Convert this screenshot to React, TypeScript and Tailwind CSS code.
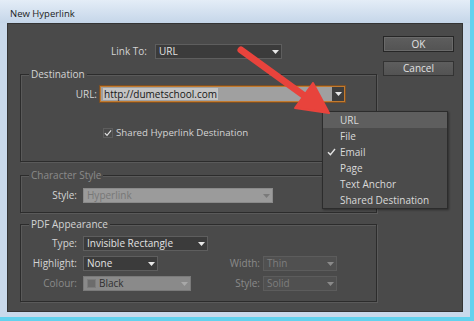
import React from 'react';

type Tone = 'dark' | 'off' | 'grey' | 'pale';

const Caret: React.FC<{ color: string }> = ({ color }) => (
  <svg width="7" height="4" viewBox="0 0 7 4">
    <path d="M0 0H7L3.5 4Z" fill={color} />
  </svg>
);

interface SelectProps {
  value: string;
  className: string;
  tone?: Tone;
  swatch?: boolean;
}

const tones: Record<Tone, { box: string; caret: string }> = {
  dark: { box: 'bg-[#3b3b3b] border-[#5e5e5e] text-[#e2e2e2]', caret: '#e8e8e8' },
  off: { box: 'bg-[#505050] border-[#5c5c5c] text-[#7e7e7e]', caret: '#8a8a8a' },
  grey: { box: 'bg-[#8a8a8a] border-[#7a7a7a] text-[#303030]', caret: '#a8a8a8' },
  pale: { box: 'bg-[#9b9b9b] border-[#8a8a8a] text-[#777777]', caret: '#7a7a7a' },
};

const Select: React.FC<SelectProps> = ({ value, className, tone = 'dark', swatch }) => (
  <div className={`flex h-[15px] items-center border ${tones[tone].box} ${className}`}>
    {swatch && <span className="ml-[3px] h-[9px] w-[9px] border border-[#7c7c7c] bg-[#6c6c6c]" />}
    <span className="flex-1 whitespace-nowrap pl-[3px] leading-[13px]">{value}</span>
    <span className="flex h-full w-[12px] items-center justify-center">
      <Caret color={tones[tone].caret} />
    </span>
  </div>
);

const Group: React.FC<{ title: string; disabled?: boolean; className: string; children: React.ReactNode }> = ({
  title,
  disabled,
  className,
  children,
}) => (
  <fieldset
    className={`border border-[#2c2c2c] shadow-[inset_1px_1px_0_#5a5a5a,1px_1px_0_#5a5a5a] ${className}`}
  >
    <legend
      className={`ml-[8px] bg-[#4a4a4a] px-[2px] leading-[14px] ${disabled ? 'text-[#8a8a8a]' : 'text-[#d4d4d4]'}`}
    >
      {title}
    </legend>
    {children}
  </fieldset>
);

const menuItems = ['URL', 'File', 'Email', 'Page', 'Text Anchor', 'Shared Destination'];

export default function App() {
  return (
    <div className="relative h-[321px] w-[474px] overflow-hidden border-r-4 border-b-4 border-[#63d2ee] bg-[#c9d9eb] font-['Open_Sans','Liberation_Sans',sans-serif]">
      <div className="flex h-[23px] items-center bg-gradient-to-b from-[#e4edf7] to-[#c5d6e9] pl-[10px] pt-[5px] text-[9.5px] text-[#1c1c1c]">
        New Hyperlink
      </div>

      <div className="ml-[7px] flex h-[289px] w-[456px] border border-[#343434] bg-[#4a4a4a] text-[10px] text-[#d4d4d4]">
        <div className="flex w-[369px] flex-col pl-[12px] pt-[20px]">
          <div className="flex h-[15px] items-center">
            <span className="w-[130px] pr-[3px] text-right">Link To:</span>
            <Select value="URL" className="ml-[5px] w-[127px]" />
          </div>

          <Group title="Destination" className="mt-[8px] h-[95px] w-[357px]">
            <div className="mt-[5px] flex h-[16px] items-center">
              <span className="w-[76px] text-right">URL:</span>
              <div className="ml-[3px] flex h-[16px] w-[245px] items-center border border-[#c27a2e] bg-[#a0a0a0] shadow-[0_0_0_1px_#7a4f25]">
                <span className="ml-[2px] bg-[#c4c4c4] px-[1px] leading-[12px] text-[#161616]">http://dumetschool.com</span>
                <span className="flex-1" />
                <span className="flex h-full w-[12px] items-center justify-center bg-[#3e3e3e]">
                  <Caret color="#e8e8e8" />
                </span>
              </div>
            </div>
            <div className="ml-[82px] mt-[24px] flex items-center">
              <span className="flex h-[10px] w-[10px] items-center justify-center border border-[#5d5d5d]">
                <svg width="9" height="8" viewBox="0 0 9 8">
                  <path d="M1 4.2L3.4 6.6L8 1" stroke="#e2e2e2" strokeWidth="1.3" fill="none" />
                </svg>
              </span>
              <span className="ml-[3px] text-[9.7px]">Shared Hyperlink Destination</span>
            </div>
          </Group>

          <Group title="Character Style" disabled className="mt-[6px] h-[45px] w-[357px]">
            <div className="mt-[6px] flex items-center">
              <span className="w-[56px] text-right">Style:</span>
              <Select value="Hyperlink" tone="pale" className="ml-[6px] w-[190px]" />
            </div>
          </Group>

          <Group title="PDF Appearance" className="mt-[4px] h-[85px] w-[357px]">
            <div className="mt-[5px] flex flex-col gap-[5px]">
              <div className="flex items-center">
                <span className="w-[56px] text-right">Type:</span>
                <Select value="Invisible Rectangle" className="ml-[6px] w-[125px]" />
              </div>
              <div className="flex items-center">
                <span className="w-[56px] text-right">Highlight:</span>
                <Select value="None" className="ml-[6px] w-[75px]" />
                <span className="w-[102px] text-right text-[#8a8a8a]">Width:</span>
                <Select value="Thin" tone="off" className="ml-[3px] w-[74px]" />
              </div>
              <div className="flex items-center">
                <span className="w-[56px] text-right text-[#8a8a8a]">Colour:</span>
                <Select value="Black" tone="grey" swatch className="ml-[6px] w-[108px]" />
                <span className="w-[69px] text-right text-[#8a8a8a]">Style:</span>
                <Select value="Solid" tone="off" className="ml-[3px] w-[74px]" />
              </div>
            </div>
          </Group>
        </div>

        <div className="ml-[6px] flex flex-col pt-[12px]">
          <button className="h-[16px] w-[71px] border border-[#262626] bg-gradient-to-b from-[#5e5e5e] to-[#535353] text-[10px] leading-[13px] text-[#e2e2e2] shadow-[inset_0_0_0_1px_#6a6a6a]">
            OK
          </button>
          <button className="mt-[9px] h-[15px] w-[71px] border border-[#333333] bg-gradient-to-b from-[#5e5e5e] to-[#535353] text-[10px] leading-[13px] text-[#e2e2e2]">
            Cancel
          </button>
        </div>
      </div>

      <div className="absolute left-[322px] top-[111px] w-[126px] border border-[#2c2c2c] bg-[#4b4b4b] text-[10px] text-[#dadada] shadow-[1px_1px_2px_rgba(0,0,0,0.4)]">
        {menuItems.map((item, i) => (
          <div key={item} className={`relative flex h-[16px] items-center pl-[17px] ${i === 0 ? 'bg-[#5e5e5e]' : ''}`}>
            {item === 'Email' && (
              <svg className="absolute left-[4px]" width="9" height="8" viewBox="0 0 9 8">
                <path d="M1 4.2L3.4 6.6L8 1" stroke="#e2e2e2" strokeWidth="1.4" fill="none" />
              </svg>
            )}
            {item}
          </div>
        ))}
      </div>

      <svg className="pointer-events-none absolute left-0 top-0" width="474" height="321">
        <line x1="241" y1="50" x2="306" y2="97" stroke="#e8433c" strokeWidth="7" strokeLinecap="round" />
        <path d="M329 113L313 83L295 108Z" fill="#e8433c" stroke="#e8433c" strokeWidth="2" strokeLinejoin="round" />
      </svg>
    </div>
  );
}
